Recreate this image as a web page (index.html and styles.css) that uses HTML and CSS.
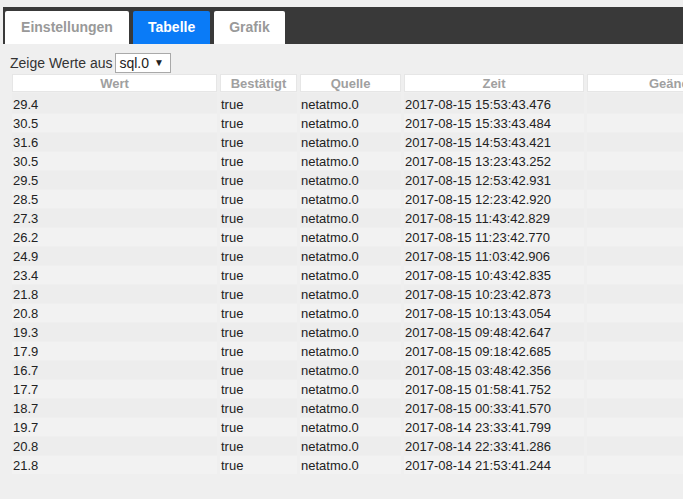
FILE: index.html
```html
<!DOCTYPE html>
<html lang="de">
<head>
<meta charset="utf-8">
<title>Tabelle</title>
<link rel="stylesheet" href="styles.css">
</head>
<body>
<div class="page">
  <nav class="tabbar">
    <div class="tab">Einstellungen</div>
    <div class="tab active">Tabelle</div>
    <div class="tab">Grafik</div>
  </nav>
  <div class="content">
    <div class="filter">
      <span class="label">Zeige Werte aus</span>
      <span class="select">sql.0 <span class="caret">▼</span></span>
    </div>
    <table class="data">
      <colgroup>
        <col class="c-wert"><col class="c-best"><col class="c-quelle"><col class="c-zeit"><col class="c-lc">
      </colgroup>
      <thead>
        <tr><th>Wert</th><th>Bestätigt</th><th>Quelle</th><th>Zeit</th><th>Geändert</th></tr>
      </thead>
      <tbody>
        <tr><td>29.4</td><td>true</td><td>netatmo.0</td><td>2017-08-15 15:53:43.476</td><td></td></tr>
        <tr><td>30.5</td><td>true</td><td>netatmo.0</td><td>2017-08-15 15:33:43.484</td><td></td></tr>
        <tr><td>31.6</td><td>true</td><td>netatmo.0</td><td>2017-08-15 14:53:43.421</td><td></td></tr>
        <tr><td>30.5</td><td>true</td><td>netatmo.0</td><td>2017-08-15 13:23:43.252</td><td></td></tr>
        <tr><td>29.5</td><td>true</td><td>netatmo.0</td><td>2017-08-15 12:53:42.931</td><td></td></tr>
        <tr><td>28.5</td><td>true</td><td>netatmo.0</td><td>2017-08-15 12:23:42.920</td><td></td></tr>
        <tr><td>27.3</td><td>true</td><td>netatmo.0</td><td>2017-08-15 11:43:42.829</td><td></td></tr>
        <tr><td>26.2</td><td>true</td><td>netatmo.0</td><td>2017-08-15 11:23:42.770</td><td></td></tr>
        <tr><td>24.9</td><td>true</td><td>netatmo.0</td><td>2017-08-15 11:03:42.906</td><td></td></tr>
        <tr><td>23.4</td><td>true</td><td>netatmo.0</td><td>2017-08-15 10:43:42.835</td><td></td></tr>
        <tr><td>21.8</td><td>true</td><td>netatmo.0</td><td>2017-08-15 10:23:42.873</td><td></td></tr>
        <tr><td>20.8</td><td>true</td><td>netatmo.0</td><td>2017-08-15 10:13:43.054</td><td></td></tr>
        <tr><td>19.3</td><td>true</td><td>netatmo.0</td><td>2017-08-15 09:48:42.647</td><td></td></tr>
        <tr><td>17.9</td><td>true</td><td>netatmo.0</td><td>2017-08-15 09:18:42.685</td><td></td></tr>
        <tr><td>16.7</td><td>true</td><td>netatmo.0</td><td>2017-08-15 03:48:42.356</td><td></td></tr>
        <tr><td>17.7</td><td>true</td><td>netatmo.0</td><td>2017-08-15 01:58:41.752</td><td></td></tr>
        <tr><td>18.7</td><td>true</td><td>netatmo.0</td><td>2017-08-15 00:33:41.570</td><td></td></tr>
        <tr><td>19.7</td><td>true</td><td>netatmo.0</td><td>2017-08-14 23:33:41.799</td><td></td></tr>
        <tr><td>20.8</td><td>true</td><td>netatmo.0</td><td>2017-08-14 22:33:41.286</td><td></td></tr>
        <tr><td>21.8</td><td>true</td><td>netatmo.0</td><td>2017-08-14 21:53:41.244</td><td></td></tr>
      </tbody>
    </table>
  </div>
</div>
</body>
</html>
```
FILE: styles.css
```css
html, body {
  margin: 0;
  padding: 0;
  background: #efefef;
  overflow: hidden;
  width: 683px;
  height: 499px;
}
body {
  font-family: "Liberation Sans", Arial, sans-serif;
  color: #222;
}
.page {
  padding-top: 7px;
}
.tabbar {
  margin-left: 3px;
  background: #393939;
  height: 37px;
  display: flex;
  align-items: flex-end;
  gap: 4px;
  padding-left: 2px;
  box-sizing: border-box;
}
.tab {
  height: 33px;
  line-height: 33px;
  padding: 0 15px;
  background: #fff;
  color: #999;
  font-weight: bold;
  font-size: 14px;
  border-radius: 2px 2px 0 0;
  box-sizing: border-box;
}
.tab:first-child {
  width: 124px;
  padding: 0;
  text-align: center;
}
.tab.active {
  background: #0a7bf7;
  color: #fff;
}
.content {
  padding: 9px 0 0 10px;
}
.filter {
  display: flex;
  align-items: center;
  height: 20px;
  font-size: 14px;
  color: #333;
}
.label {
  margin-right: 3px;
}
.select {
  display: inline-block;
  height: 20px;
  line-height: 18px;
  padding: 0 4px 0 3px;
  box-sizing: border-box;
  background: #fff;
  border: 1px solid #a9a9a9;
  font-size: 14px;
  color: #222;
  width: 56px;
}
.caret {
  font-size: 10px;
  vertical-align: 2px;
  margin-left: 1px;
}
.data {
  border-collapse: separate;
  border-spacing: 3px 1px;
  margin-left: -1px;
  margin-top: 0;
  table-layout: fixed;
  width: 762px;
  font-size: 13px;
}
.c-wert { width: 205px; }
.c-best { width: 77px; }
.c-quelle { width: 101px; }
.c-zeit { width: 180px; }
.c-lc { width: 181px; }
.data th {
  background: #fff;
  border: 1px solid #e6e6e6;
  color: #a0a0a0;
  font-weight: bold;
  font-size: 13px;
  height: 18px;
  padding: 0;
  box-sizing: border-box;
  text-align: center;
  white-space: nowrap;
  overflow: hidden;
}
.data td {
  height: 18px;
  padding: 0 1px;
  white-space: nowrap;
  color: #222;
}
.data tbody tr:first-child td {
  padding-top: 2px;
}
.data tbody tr:nth-child(even) td {
  background: #f2f2f2;
}
.data tbody tr:nth-child(odd) td {
  background: #ededed;
}
```
